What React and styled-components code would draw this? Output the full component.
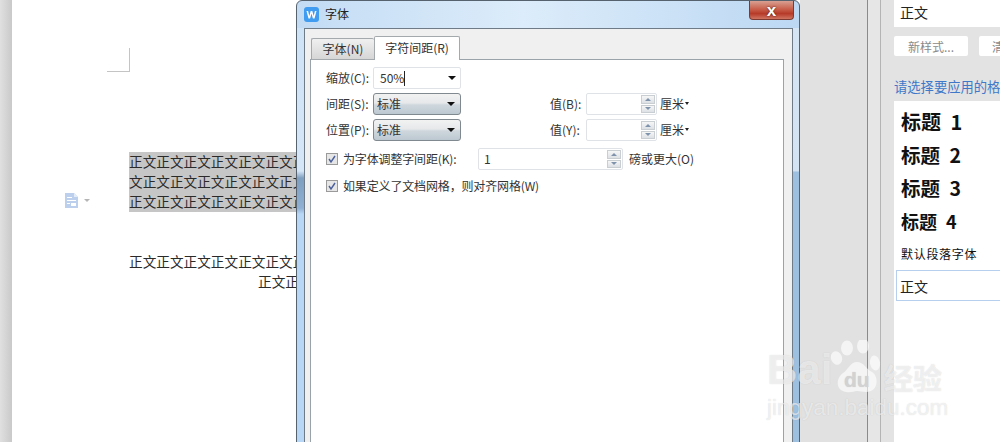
import React from "react";
import styled, { createGlobalStyle } from "styled-components";

const Global = createGlobalStyle`
  html, body { margin: 0; padding: 0; background: #fff; }
  body { font-family: "Noto Sans CJK SC", "Liberation Sans", sans-serif; font-size: 12px; color: #333; }
`;

const Screen = styled.div`
  position: relative;
  display: flex;
  width: 1000px;
  height: 442px;
  overflow: hidden;
`;

const Gutter = styled.div`
  width: 12px;
  flex: none;
  background: linear-gradient(90deg, #e0e0e0, #c9c9c9);
`;

/* document page behind the dialog */
const DocPage = styled.div`
  position: relative;
  width: 284px;
  flex: none;
  overflow: hidden;
  background: #fff;
`;

const CropMark = styled.div`
  width: 22px;
  height: 23px;
  margin: 48px 0 0 95px;
  border-right: 1px solid #c4c4c4;
  border-bottom: 1px solid #c4c4c4;
`;

const Paragraph = styled.div`
  margin: ${(p) => p.$top}px 0 0 117px;
`;

const DocLine = styled.div`
  height: 20px;
  line-height: 18px;
  font-size: 13.65px;
  white-space: nowrap;
  color: #2a2a2a;
  padding-left: ${(p) => p.$indent || 0}px;
  background: ${(p) => (p.$selected ? "#c6c6c6" : "transparent")};
`;

const ParaHandle = styled.div`
  position: absolute;
  left: 53px;
  top: 193px;
  display: flex;
  align-items: center;
  gap: 5px;
`;

const HandleCaret = styled.span`
  width: 0;
  height: 0;
  border-left: 3px solid transparent;
  border-right: 3px solid transparent;
  border-top: 3px solid #b5b5b5;
`;

/* font dialog */
const Dialog = styled.div`
  width: 504px;
  height: 460px;
  flex: none;
  display: flex;
  flex-direction: column;
  box-sizing: border-box;
  border: 1px solid #56626e;
  border-radius: 6px 6px 0 0;
  background: linear-gradient(90deg, #c3dcf4, #dcecfa 45%, #bcd8f3);
`;

const TitleBar = styled.div`
  height: 27px;
  flex: none;
  display: flex;
  align-items: center;
  padding-left: 7px;
  font-size: 12px;
  color: #222;
`;

const TitleText = styled.span`
  margin-bottom: 2px;
`;

const AppIcon = styled.svg`
  width: 15px;
  height: 15px;
  margin-right: 6px;
`;

const CloseButton = styled.div`
  width: 45px;
  height: 19px;
  margin: -8px 5px 0 auto;
  box-sizing: border-box;
  display: flex;
  align-items: center;
  justify-content: center;
  border: 1px solid #7d3a32;
  border-top: 0;
  border-radius: 0 0 4px 4px;
  background: linear-gradient(#d9a092, #c9604c 45%, #b63a28 70%, #cf7460);
  color: #fff;
  font: bold 17px/15px "Liberation Sans", sans-serif;
  text-shadow: 0 0 2px #3a140e;
`;

const FrameBody = styled.div`
  flex: 1;
  display: flex;
  min-height: 0;
`;

const FrameEdge = styled.div`
  flex: none;
  width: ${(p) => p.$width}px;
  background: ${(p) => p.$fill};
`;

const Client = styled.div`
  width: 489px;
  flex: none;
  box-sizing: border-box;
  display: flex;
  flex-direction: column;
  padding: 8px 8px 0 5px;
  background: #f0f0f0;
  border: 1px solid #6f7c88;
  border-bottom: 0;
`;

const Tabs = styled.div`
  display: flex;
  align-items: flex-end;
  height: 23px;
  margin-left: 1px;
  margin-bottom: -1px;
  position: relative;
  z-index: 1;
`;

const Tab = styled.div`
  box-sizing: border-box;
  width: ${(p) => (p.$active ? 86 : 63)}px;
  height: ${(p) => (p.$active ? 24 : 22)}px;
  display: flex;
  align-items: center;
  justify-content: center;
  padding-bottom: 2px;
  border: 1px solid #a4a9ae;
  border-bottom: ${(p) => (p.$active ? 0 : "1px solid #a4a9ae")};
  border-right: ${(p) => (p.$active ? "1px solid #a4a9ae" : 0)};
  border-radius: 2px 2px 0 0;
  background: ${(p) => (p.$active ? "#fff" : "linear-gradient(#f0f0f0, #d6d6d6)")};
`;

const Panel = styled.div`
  flex: 1;
  display: flex;
  flex-direction: column;
  padding: 7px 0 0 15px;
  border: 1px solid #9aa2aa;
  background: #fff;
`;

const Row = styled.div`
  display: flex;
  align-items: center;
  height: 22px;
  margin-bottom: ${(p) => p.$after}px;
`;

const Label = styled.span`
  width: 47px;
  flex: none;
  margin-bottom: 2px;
  white-space: nowrap;
`;

const Arrow = styled.span`
  width: 0;
  height: 0;
  margin-left: auto;
  border-left: 4px solid transparent;
  border-right: 4px solid transparent;
  border-top: 4px solid #111;
`;

const ComboInput = styled.div`
  box-sizing: border-box;
  width: 88px;
  height: 22px;
  display: flex;
  align-items: center;
  padding: 0 4px 0 6px;
  border: 1px solid #dfe3e8;
  border-radius: 2px;
`;

const FieldText = styled.span`
  margin-bottom: 2px;
`;

const Caret = styled.span`
  width: 1px;
  height: 15px;
  background: #222;
`;

const ComboButton = styled.div`
  box-sizing: border-box;
  width: 88px;
  height: 22px;
  display: flex;
  align-items: center;
  padding: 0 5px 0 3px;
  border: 1px solid #80898f;
  border-radius: 3px;
  background: linear-gradient(#f2f2f2, #e6e8ea 45%, #cfd7dd 55%, #bcc8d0);
`;

const ValueLabel = styled.span`
  width: 36px;
  margin: 0 0 2px 89px;
  flex: none;
  white-space: nowrap;
`;

const NumberBox = styled.div`
  box-sizing: border-box;
  width: ${(p) => p.$width}px;
  height: 22px;
  flex: none;
  display: flex;
  align-items: center;
  padding: 0 1px 0 5px;
  border: 1px solid #dfe3e8;
  border-radius: 2px;
`;

const Spinner = styled.div`
  width: 14px;
  height: 18px;
  margin-left: auto;
  display: flex;
  flex-direction: column;
  gap: 1px;
`;

const SpinPart = styled.div`
  flex: 1;
  display: flex;
  align-items: center;
  justify-content: center;
  border: 1px solid #c9ced3;
  background: linear-gradient(#f6f6f6, #dde1e5);

  &::after {
    content: "";
    border-left: 3px solid transparent;
    border-right: 3px solid transparent;
    border-${(p) => (p.$up ? "bottom" : "top")}: 3px solid #7f93ad;
  }
`;

const Unit = styled.span`
  display: flex;
  align-items: center;
  gap: 1px;
  margin: 0 0 2px 3px;
  white-space: nowrap;
`;

const UnitCaret = styled.span`
  width: 0;
  height: 0;
  border-left: 2.5px solid transparent;
  border-right: 2.5px solid transparent;
  border-top: 3px solid #222;
`;

const Check = styled.span`
  box-sizing: border-box;
  width: 12px;
  height: 12px;
  flex: none;
  margin-right: 5px;
  display: flex;
  border: 1px solid #9a9a9a;
  background: #e6e6e6;
`;

const CheckText = styled.span`
  white-space: nowrap;
  letter-spacing: -0.15px;
  margin-bottom: 2px;
  width: ${(p) => (p.$width ? `${p.$width}px` : "auto")};
  flex: none;
`;

const AfterBox = styled.span`
  margin: 0 0 2px 6px;
  white-space: nowrap;
`;

/* area right of the dialog */
const GreyGap = styled.div`
  width: 68px;
  flex: none;
  box-sizing: border-box;
  background: #e1e1e1;
  border-right: 1px solid #8a8a8a;
`;

const Strip = styled.div`
  width: 13px;
  flex: none;
  box-sizing: border-box;
  background: #e6e6e6;
  border-right: 1px solid #b4b4b4;
`;

const StylePane = styled.div`
  flex: 1;
  min-width: 0;
  display: flex;
  flex-direction: column;
  padding-left: 13px;
  background: #e3e3e3;
  overflow: hidden;
`;

const CurrentStyle = styled.div`
  box-sizing: border-box;
  height: 27px;
  flex: none;
  display: flex;
  align-items: center;
  padding: 0 0 3px 6px;
  background: #fff;
  font-size: 14px;
  color: #222;
`;

const PaneButtons = styled.div`
  display: flex;
  gap: 11px;
  margin-top: 9px;
  flex: none;
`;

const PaneButton = styled.div`
  width: 74px;
  height: 20px;
  flex: none;
  display: flex;
  align-items: center;
  justify-content: center;
  background: #fff;
  border-radius: 2px;
  color: #8a8a8a;
`;

const PaneHint = styled.div`
  margin-top: 21px;
  height: 20px;
  line-height: 20px;
  flex: none;
  font-size: 13.3px;
  color: #3f78c9;
  white-space: nowrap;
`;

const StyleList = styled.div`
  flex: 1;
  margin-top: 4px;
  padding-top: 4px;
  background: #fff;
`;

const StyleRow = styled.div`
  height: 33px;
  display: flex;
  align-items: center;
  padding-left: 7px;
  white-space: nowrap;
  color: #111;
  font-size: ${(p) => p.$size}px;
  font-weight: ${(p) => (p.$bold ? 700 : 400)};
  word-spacing: ${(p) => (p.$bold ? 5 : 0)}px;
  letter-spacing: ${(p) => p.$track || 0}px;
`;

const StyleSelected = styled.div`
  box-sizing: border-box;
  width: 200px;
  height: 31px;
  margin-left: 2px;
  display: flex;
  align-items: center;
  padding-left: 3px;
  border: 1px solid #b6cfee;
  font-size: 14px;
  color: #222;
`;

/* baidu watermark sits over everything */
const Watermark = styled.div`
  position: absolute;
  left: 767px;
  top: 340px;
  width: 190px;
  display: flex;
  flex-direction: column;
  color: rgba(255, 255, 255, 0.62);
  text-shadow: 0 0 1px rgba(120, 120, 120, 0.3);
  pointer-events: none;
`;

const MarkTop = styled.div`
  display: flex;
  align-items: flex-end;
  height: 55px;
`;

const MarkLatin = styled.span`
  font: bold 42px/50px "Liberation Sans", sans-serif;
  width: 63px;
  flex: none;
`;

const MarkCjk = styled.span`
  font-size: 29px;
  line-height: 36px;
  font-weight: 700;
  margin-left: 2px;
`;

const MarkUrl = styled.div`
  font: 22.5px/26px "Liberation Sans", sans-serif;
  white-space: nowrap;
`;

const DocIcon = () => (
  <svg width="14" height="15" viewBox="0 0 14 15">
    <path d="M0 0h9l4 4v11H0z" fill="#bcd0ee" />
    <path d="M9 0v4h4z" fill="#e3ecf9" />
    <path d="M2 4h5v1H2zM2 7h9v1H2zM2 10h3v1H2zM6 10h5v3H6z" fill="#fff" />
  </svg>
);

const CheckMark = () => (
  <svg width="10" height="10" viewBox="0 0 10 10">
    <path d="M2 5l2 3 4-6" fill="none" stroke="#4a5f9c" strokeWidth="1.4" />
  </svg>
);

const NumberField = ({ width, value }) => (
  <NumberBox $width={width}>
    {value && <FieldText>{value}</FieldText>}
    <Spinner>
      <SpinPart $up />
      <SpinPart />
    </Spinner>
  </NumberBox>
);

export default function App() {
  const text = "正文".repeat(6);
  return (
    <Screen>
      <Global />
      <Gutter />
      <DocPage>
        <CropMark />
        <Paragraph $top={80}>
          <DocLine $selected>{text + "正"}</DocLine>
          <DocLine $selected>{"文" + text}</DocLine>
          <DocLine $selected>{text + "正"}</DocLine>
        </Paragraph>
        <Paragraph $top={40}>
          <DocLine>{text + "正"}</DocLine>
          <DocLine $indent={129}>正文正</DocLine>
        </Paragraph>
        <ParaHandle>
          <DocIcon />
          <HandleCaret />
        </ParaHandle>
      </DocPage>

      <Dialog>
        <TitleBar>
          <AppIcon viewBox="0 0 15 15">
            <rect width="15" height="15" rx="3" fill="#3f9cf0" />
            <path d="M2.500 4h1.600l1.200 5 1.400-5h1.600l1.400 5 1.200-5h1.600l-2 7.500H8.900L7.500 6.500 6.100 11.500H4.500z" fill="#fff" />
          </AppIcon>
          <TitleText>字体</TitleText>
          <CloseButton>x</CloseButton>
        </TitleBar>
        <FrameBody>
          <FrameEdge
            $width={7}
            $fill="linear-gradient(#cfe3f7 0, #d5e6f7 143px, #7f9fc0 150px, #8fb0d2 180px, #b8d6f5 186px, #b8d6f5 100%)"
          />
          <Client>
            <Tabs>
              <Tab>字体(N)</Tab>
              <Tab $active>字符间距(R)</Tab>
            </Tabs>
            <Panel>
              <Row $after={4}>
                <Label>缩放(C):</Label>
                <ComboInput>
                  <FieldText>50%</FieldText>
                  <Caret />
                  <Arrow />
                </ComboInput>
              </Row>
              <Row $after={4}>
                <Label>间距(S):</Label>
                <ComboButton>
                  <FieldText>标准</FieldText>
                  <Arrow />
                </ComboButton>
                <ValueLabel>值(B):</ValueLabel>
                <NumberField width={71} />
                <Unit>
                  厘米
                  <UnitCaret />
                </Unit>
              </Row>
              <Row $after={7}>
                <Label>位置(P):</Label>
                <ComboButton>
                  <FieldText>标准</FieldText>
                  <Arrow />
                </ComboButton>
                <ValueLabel>值(Y):</ValueLabel>
                <NumberField width={71} />
                <Unit>
                  厘米
                  <UnitCaret />
                </Unit>
              </Row>
              <Row $after={5}>
                <Check>
                  <CheckMark />
                </Check>
                <CheckText $width={135}>为字体调整字间距(K):</CheckText>
                <NumberField width={145} value="1" />
                <AfterBox>磅或更大(O)</AfterBox>
              </Row>
              <Row $after={0}>
                <Check>
                  <CheckMark />
                </Check>
                <CheckText>如果定义了文档网格，则对齐网格(W)</CheckText>
              </Row>
            </Panel>
          </Client>
          <FrameEdge
            $width={6}
            $fill="linear-gradient(#d6e5f4 0, #d3e3f3 143px, #9dbfe0 144px, #9dbfe0 100%)"
          />
        </FrameBody>
      </Dialog>

      <GreyGap />
      <Strip />
      <StylePane>
        <CurrentStyle>正文</CurrentStyle>
        <PaneButtons>
          <PaneButton>新样式...</PaneButton>
          <PaneButton>清除格式</PaneButton>
        </PaneButtons>
        <PaneHint>请选择要应用的格式</PaneHint>
        <StyleList>
          <StyleRow $bold $size={20}>标题 1</StyleRow>
          <StyleRow $bold $size={19.5}>标题 2</StyleRow>
          <StyleRow $bold $size={19.5}>标题 3</StyleRow>
          <StyleRow $bold $size={18}>标题 4</StyleRow>
          <StyleRow $size={12} $track={0.7}>默认段落字体</StyleRow>
          <StyleSelected>正文</StyleSelected>
        </StyleList>
      </StylePane>

      <Watermark>
        <MarkTop>
          <MarkLatin>Bai</MarkLatin>
          <svg width="52" height="55" viewBox="0 0 52 55">
            <g fill="currentColor">
              <ellipse cx="17" cy="8" rx="6" ry="7.500" />
              <ellipse cx="33" cy="6" rx="6" ry="7.500" />
              <ellipse cx="6.500" cy="18" rx="5.500" ry="7" transform="rotate(-20 6.500 18)" />
              <ellipse cx="45" cy="23" rx="5" ry="7.500" transform="rotate(-10 45 23)" />
              <path d="M27 22c7 0 9 7 15 10 7 4 7 20-6 20-4 0-6-1-9-1s-6 2-11 1c-11-2-10-14-3-19 5-3 7-11 14-11z" />
            </g>
            <text x="14" y="47" fontFamily="Liberation Sans" fontWeight="700" fontSize="21" fill="#d2d2d2">du</text>
          </svg>
          <MarkCjk>经验</MarkCjk>
        </MarkTop>
        <MarkUrl>jingyan.baidu.com</MarkUrl>
      </Watermark>
    </Screen>
  );
}
